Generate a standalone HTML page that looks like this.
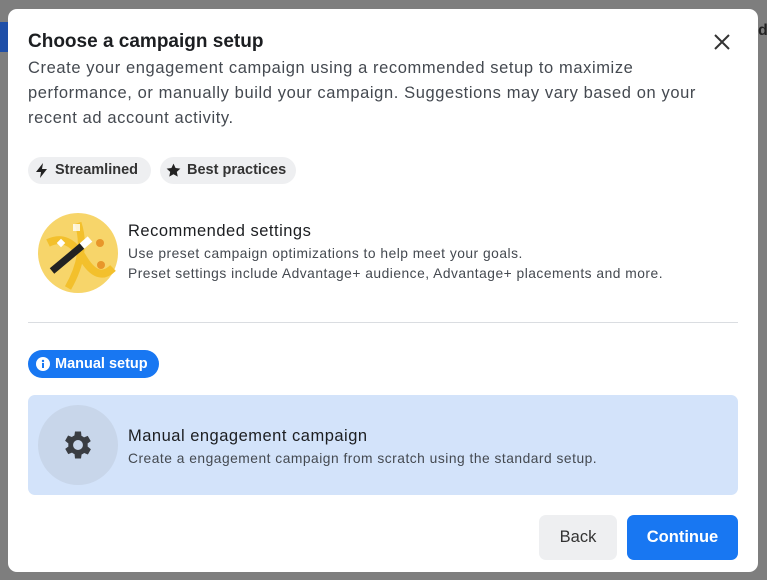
<!DOCTYPE html>
<html><head><style>
body{margin:0;width:767px;height:580px;background:#7e7e7e;position:relative;overflow:hidden;font-family:"Liberation Sans",Arial,sans-serif;color:#1c1e21}
.m{position:absolute;left:8px;top:9px;width:750px;height:563px;background:#fff;border-radius:9px}
.a{position:absolute}
h1{position:absolute;left:20px;top:22px;margin:0;font-size:19px;font-weight:bold;color:#1c1e21}
.d{left:20px;top:47px;font-size:16.5px;line-height:25px;color:#444950;width:685px;letter-spacing:0.6px}
.chip{position:absolute;height:27px;border-radius:14px;background:#eeeff1;font-size:14.5px;font-weight:bold;color:#333;line-height:27px;padding-left:27px;box-sizing:border-box}
.t1{font-size:16.5px;color:#1c1e21;letter-spacing:0.5px}
.t2{font-size:13.8px;color:#444950;line-height:20px;letter-spacing:0.5px}
.btn{position:absolute;top:506px;height:45px;border-radius:7px;font-size:16.5px;line-height:45px;text-align:center}
</style></head><body>
<div class="a" style="left:0;top:22px;width:8px;height:30px;background:#1f4fa8"></div>
<div class="a" style="left:758px;top:22px;width:9px;height:30px;color:#222;font-size:16px;font-weight:bold">d</div>
<div class="m">
<h1>Choose a campaign setup</h1>
<svg class="a" style="left:705px;top:24px" width="18" height="18" viewBox="0 0 18 18"><path d="M2 2L16 16M16 2L2 16" stroke="#333" stroke-width="2"/></svg>
<div class="a d">Create your engagement campaign using a recommended setup to maximize performance, or manually build your campaign. Suggestions may vary based on your recent ad account activity.</div>
<div class="chip" style="left:20px;width:123px;top:148px"><svg class="a" style="left:8px;top:6px" width="12" height="15" viewBox="0 0 12 15"><path d="M7 0L0 9h5l-1 6 7-9H6z" fill="#222"/></svg>Streamlined</div>
<div class="chip" style="left:152px;width:136px;top:148px"><svg class="a" style="left:6px;top:6px" width="15" height="15" viewBox="0 0 24 24"><path d="M12 1l3.3 7 7.7.9-5.7 5.3 1.5 7.6L12 18l-6.8 3.8 1.5-7.6L1 8.9 8.7 8z" fill="#222"/></svg>Best practices</div>
<svg class="a" style="left:30px;top:204px" width="80" height="80" viewBox="0 0 80 80"><circle cx="40" cy="40" r="40" fill="#f7d56a"/><path d="M10 30 Q30 20 45 45 T75 55" stroke="#f3c02c" stroke-width="8" fill="none"/><path d="M40 10 Q50 40 30 75" stroke="#f3c02c" stroke-width="7" fill="none"/><path d="M14 58L44 33" stroke="#222" stroke-width="7"/><path d="M44 33L52 26" stroke="#fff" stroke-width="7"/><circle cx="62" cy="30" r="4" fill="#e8962a"/><circle cx="63" cy="52" r="4" fill="#e8962a"/><rect x="35" y="11" width="7" height="7" fill="#fff" opacity=".8"/><rect x="20" y="27" width="6" height="6" fill="#fff" transform="rotate(45 23 30)"/></svg>
<div class="a t1" style="left:120px;top:213px">Recommended settings</div>
<div class="a t2" style="left:120px;top:235px">Use preset campaign optimizations to help meet your goals.<br>Preset settings include Advantage+ audience, Advantage+ placements and more.</div>
<div class="a" style="left:20px;top:313px;width:710px;height:1px;background:#dadde1"></div>
<div class="a" style="left:20px;top:341px;width:131px;height:28px;border-radius:14px;background:#1877f2;color:#fff;font-size:14.5px;font-weight:bold;line-height:28px"><svg class="a" style="left:8px;top:7px" width="14" height="14" viewBox="0 0 14 14"><circle cx="7" cy="7" r="7" fill="#fff"/><rect x="6" y="6" width="2" height="5" fill="#1877f2"/><circle cx="7" cy="4" r="1.2" fill="#1877f2"/></svg><span style="margin-left:27px">Manual setup</span></div>
<div class="a" style="left:20px;top:386px;width:710px;height:100px;border-radius:7px;background:#d3e3fa"></div>
<div class="a" style="left:30px;top:396px;width:80px;height:80px;border-radius:50%;background:#c8d6ea"></div>
<svg class="a" style="left:52px;top:418px" width="36" height="36" viewBox="0 0 24 24"><path fill="#3a3d42" d="M19.4 13a7.6 7.6 0 000-2l2.1-1.6-2-3.5-2.5 1a7.5 7.5 0 00-1.7-1L15 3h-4l-.4 2.7a7.5 7.5 0 00-1.7 1l-2.5-1-2 3.5L6.6 11a7.6 7.6 0 000 2l-2.1 1.6 2 3.5 2.5-1a7.5 7.5 0 001.7 1L11 21h4l.4-2.7a7.5 7.5 0 001.7-1l2.5 1 2-3.5zM13 15.3a3.3 3.3 0 110-6.6 3.3 3.3 0 010 6.6z" transform="translate(-1 0)"/></svg>
<div class="a t1" style="left:120px;top:418px">Manual engagement campaign</div>
<div class="a t2" style="left:120px;top:440px">Create a engagement campaign from scratch using the standard setup.</div>
<div class="btn" style="left:531px;width:78px;background:#eeeff1;color:#333">Back</div>
<div class="btn" style="left:619px;width:111px;background:#1877f2;color:#fff;font-weight:bold">Continue</div>
</div>
</body></html>
